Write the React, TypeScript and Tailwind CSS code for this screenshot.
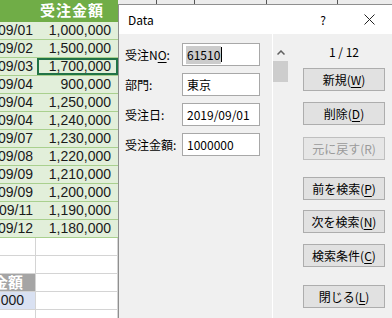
import clsx from "clsx";

const rows = [
    ["2019/09/01", "1,000,000"],
    ["2019/09/02", "1,500,000"],
    ["2019/09/03", "1,700,000"],
    ["2019/09/04", "900,000"],
    ["2019/09/04", "1,250,000"],
    ["2019/09/04", "1,240,000"],
    ["2019/09/07", "1,230,000"],
    ["2019/09/08", "1,220,000"],
    ["2019/09/09", "1,210,000"],
    ["2019/09/09", "1,200,000"],
    ["2019/09/11", "1,190,000"],
    ["2019/09/12", "1,180,000"],
];

const fields = [
    { label: <>受注N<span className="underline underline-offset-2">O</span>:</>, value: "61510", selected: true },
    { label: <>部門:</>, value: "東京" },
    { label: <>受注日:</>, value: "2019/09/01" },
    { label: <>受注金額:</>, value: "1000000" },
];

function Key({ k }: { k: string }) {
    return <span className="underline underline-offset-2">{k}</span>;
}

function Btn({ children, className, disabled }: { children: React.ReactNode; className?: string; disabled?: boolean }) {
    return (
        <div
            className={clsx(
                "flex h-[23px] w-[82px] items-center justify-center border text-[12px]",
                disabled ? "border-[#bfbfbf] bg-[#e6e6e6] text-[#9a9a9a]" : "border-[#adadad] bg-[#e1e1e1] text-black",
                className
            )}
        >
            {children}
        </div>
    );
}

function Sheet() {
    return (
        <div className="flex flex-col font-['Liberation_Sans','Noto_Sans_CJK_JP',sans-serif]">
            <div className="flex h-[22px]">
                <div className="w-[37px] bg-[#70ad47]" />
                <div className="w-[81px] bg-[#70ad47] pl-[3px] text-[15px] leading-[22px] font-bold tracking-[1px] text-white">
                    受注金額
                </div>
                <div className="flex flex-1 bg-[#ececec]">
                    <div className="w-[39px] border-r border-[#555]" />
                    <div className="w-[38px] border-r border-[#555]" />
                    <div className="w-[72px] border-r border-[#555]" />
                    <div className="w-[71px] border-r border-[#555]" />
                </div>
            </div>
            {rows.map(([d, a], i) => (
                <div key={i} className="flex h-[18px] border-b border-[#a9d08e] text-[14px] leading-[17px] text-[#1a1a1a]">
                    <div className="flex w-[37px] justify-end overflow-hidden bg-[#e2efda] pr-[4px] whitespace-nowrap">{d}</div>
                    <div
                        className={clsx(
                            "w-[81px] bg-[#e2efda] pr-[7px] text-right",
                            i === 2 && "shadow-[inset_0_0_0_2px_#217346]"
                        )}
                    >
                        {a}
                    </div>
                </div>
            ))}
            {[0, 1, 2, 3, 4].map((i) => (
                <div key={i} className="flex h-[18px] border-b border-[#d4d4d4] text-[14px] leading-[17px]">
                    <div
                        className={clsx(
                            "flex w-[36px] justify-end overflow-hidden border-r border-[#d4d4d4] whitespace-nowrap",
                            i === 2 && "bg-[#a5a5a5] pr-[12px] text-[15px] font-bold text-white",
                            i === 3 && "bg-[#d9e1f2] pr-[11px] text-[#1a1a1a]"
                        )}
                    >
                        {i === 2 ? "受注金額" : i === 3 ? "1,000,000" : ""}
                    </div>
                    <div className="w-[82px] border-r border-[#d4d4d4]" />
                </div>
            ))}
        </div>
    );
}

function DataForm() {
    return (
        <div className="absolute top-[4px] left-[118px] flex h-[314px] w-[274px] flex-col border-t border-l border-[#8f8f8f] font-['Noto_Sans_CJK_JP',sans-serif] text-black">
            <div className="flex h-[29px] items-center bg-white">
                <div className="pl-[9px] text-[12px]">Data</div>
                <div className="ml-auto flex w-[46px] justify-center text-[12px]">?</div>
                <div className="flex w-[46px] justify-center">
                    <svg width="11" height="11" viewBox="0 0 11 11">
                        <path d="M0.5 0.5 L10.5 10.5 M10.5 0.5 L0.5 10.5" stroke="#222" strokeWidth="1" />
                    </svg>
                </div>
            </div>
            <div className="flex flex-1 bg-[#f0f0f0]">
                <div className="flex w-[153px] flex-col gap-[7px] pt-[9px] pl-[6px]">
                    {fields.map((f, i) => (
                        <div key={i} className="flex h-[23px] items-center">
                            <div className="w-[57px] text-[12px]">{f.label}</div>
                            <div className="flex h-[23px] w-[78px] items-center border border-[#a8a8a8] bg-white pl-[3px] text-[12px]">
                                {f.selected ? (
                                    <>
                                        <span className="bg-[#cccccc] px-[1px]">{f.value}</span>
                                        <span className="h-[15px] w-px bg-black" />
                                    </>
                                ) : (
                                    <span className="pl-[1px]">{f.value}</span>
                                )}
                            </div>
                        </div>
                    ))}
                </div>
                <div className="flex w-[17px] flex-col border-l border-white">
                    <div className="mt-[9px] flex h-[18px] items-center justify-center">
                        <svg width="8" height="5" viewBox="0 0 8 5">
                            <path d="M0.5 4.5 L4 1 L7.5 4.5" stroke="#606060" strokeWidth="1.5" fill="none" />
                        </svg>
                    </div>
                    <div className="h-[21px] w-[15px] bg-[#cdcdcd]" />
                </div>
                <div className="flex flex-col pl-[14px]">
                    <div className="mt-[9px] flex h-[18px] w-[82px] items-center justify-center text-[12px]">1 / 12</div>
                    <Btn className="mt-[7px]">新規(<Key k="W" />)</Btn>
                    <Btn className="mt-[11px]">削除(<Key k="D" />)</Btn>
                    <Btn className="mt-[12px]" disabled>元に戻す(R)</Btn>
                    <Btn className="mt-[17px]">前を検索(<Key k="P" />)</Btn>
                    <Btn className="mt-[10px]">次を検索(<Key k="N" />)</Btn>
                    <Btn className="mt-[11px]">検索条件(<Key k="C" />)</Btn>
                    <Btn className="mt-[18px]">閉じる(<Key k="L" />)</Btn>
                </div>
            </div>
        </div>
    );
}

export default function App() {
    return (
        <div className="relative h-[318px] w-[392px] overflow-hidden bg-white">
            <Sheet />
            <DataForm />
        </div>
    );
}
